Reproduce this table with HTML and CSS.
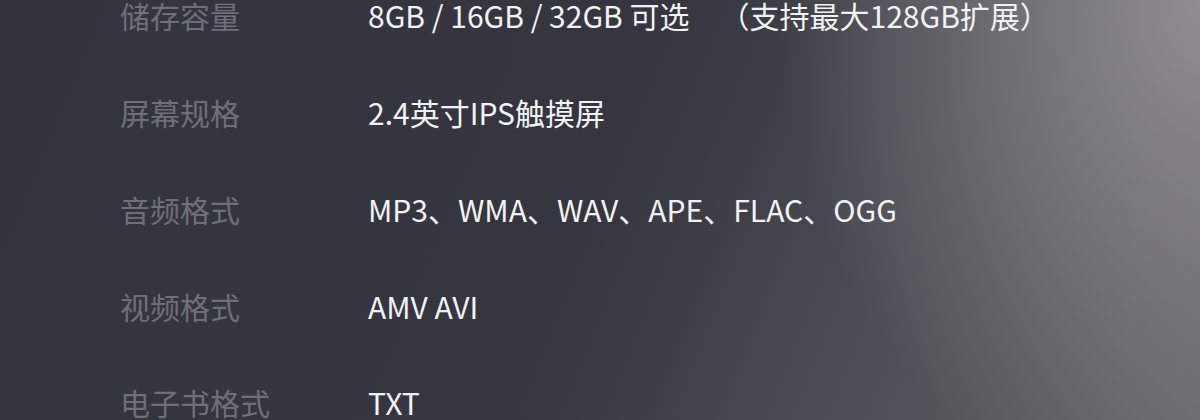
FILE: index.html
```html
<!DOCTYPE html>
<html lang="zh-CN">
<head>
  <meta charset="UTF-8">
  <meta name="viewport" content="width=device-width, initial-scale=1.0">
  <title>产品参数</title>
  <link rel="stylesheet" href="styles.css">
</head>
<body>
  <div class="specs">
    <div class="row">
      <span class="label">储存容量</span>
      <span class="value">8GB / 16GB / 32GB 可选<span class="note">（支持最大128GB扩展）</span></span>
    </div>
    <div class="row">
      <span class="label">屏幕规格</span>
      <span class="value">2.4英寸IPS触摸屏</span>
    </div>
    <div class="row">
      <span class="label">音频格式</span>
      <span class="value">MP3、WMA、WAV、APE、FLAC、OGG</span>
    </div>
    <div class="row">
      <span class="label">视频格式</span>
      <span class="value">AMV AVI</span>
    </div>
    <div class="row">
      <span class="label">电子书格式</span>
      <span class="value">TXT</span>
    </div>
  </div>
</body>
</html>
```

FILE: styles.css
```css
html, body {
  height: 100%;
}

body {
  margin: 0;
  padding: 0;
  overflow: hidden;
  font-family: "Noto Sans CJK SC", "Noto Sans", sans-serif;
  background:
    radial-gradient(ellipse 420px 520px at 100% 0%, rgba(160, 158, 162, 0.75), rgba(160, 158, 162, 0) 100%),
    linear-gradient(112deg, #34343e 0%, #363640 50%, #4c4c54 72%, #66656b 100%);
}

.specs {
  margin-top: -33px;
  padding-left: 120px;
}

.row {
  display: grid;
  grid-template-columns: 248px 1fr;
  align-items: center;
  height: 96.75px;
  font-size: 30px;
}

.label {
  color: #6f6f78;
}

.value {
  color: #f2f2f2;
}

.note {
  margin-left: 30px;
}
```
